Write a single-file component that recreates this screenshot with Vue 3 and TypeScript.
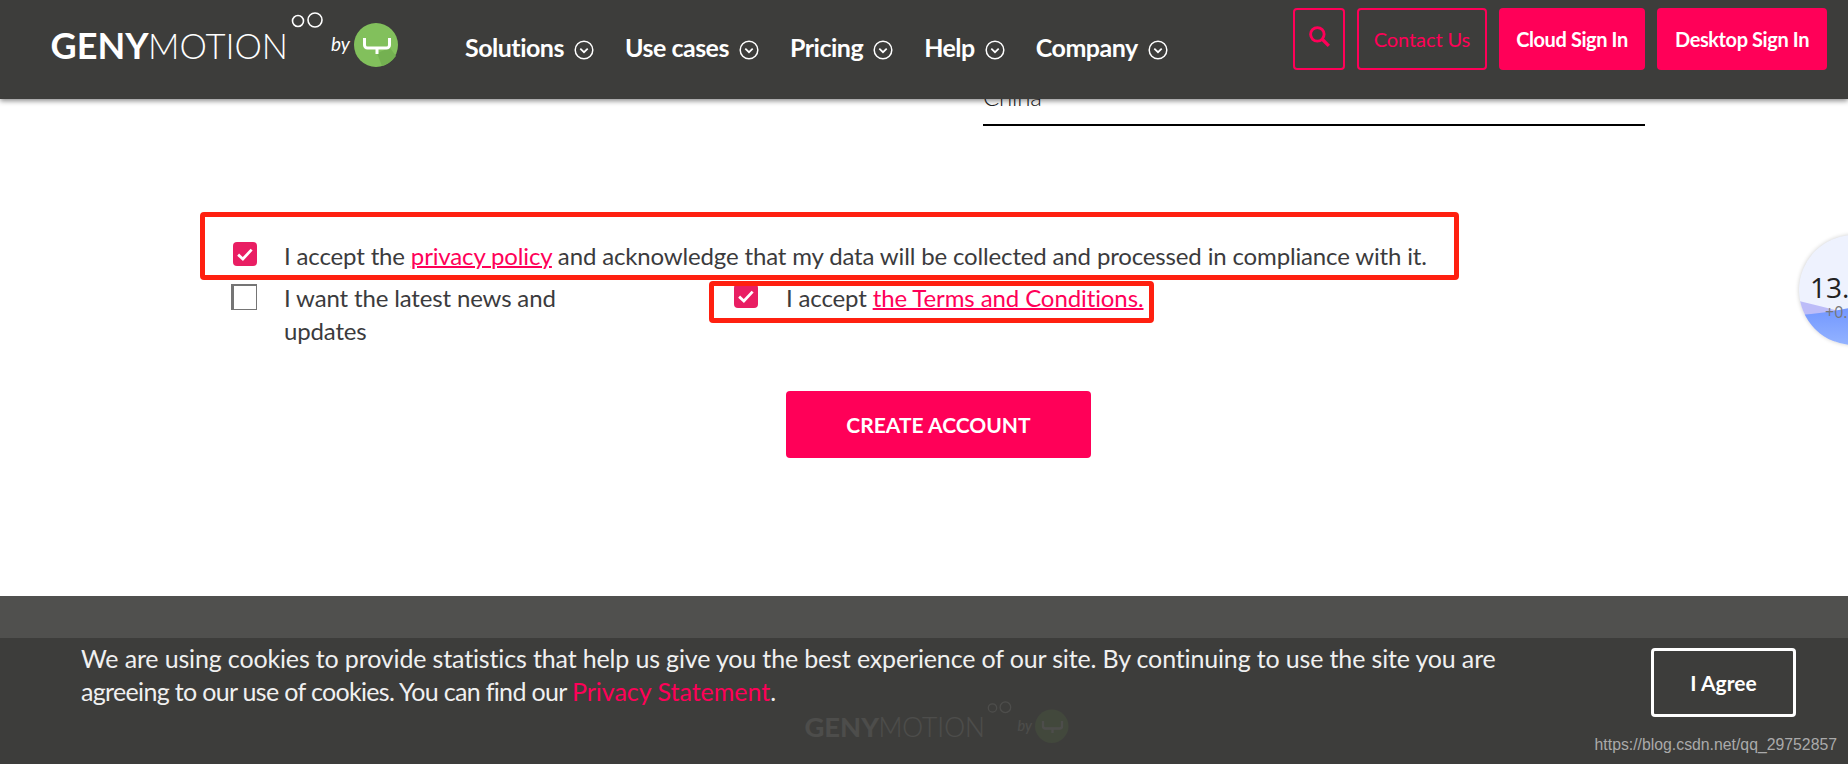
<template>
  <div class="page">
    <header class="site-header">
      <svg class="logo" viewBox="0 0 350 80" xmlns="http://www.w3.org/2000/svg">
        <text class="logo-bold" x="0.6" y="51" textLength="98" lengthAdjust="spacingAndGlyphs">GENY</text>
        <text class="logo-light" x="98" y="51" textLength="140" lengthAdjust="spacingAndGlyphs">MOTION</text>
        <circle class="logo-ring" cx="248" cy="13" r="5.5" />
        <circle class="logo-ring" cx="265" cy="12" r="7" />
        <text class="logo-by" x="281" y="43">by</text>
        <circle class="logo-badge" cx="326" cy="37" r="22" />
        <path class="logo-shade" d="M327 45l13-5 6 8q-6 8-14 10z" />
        <path class="logo-fork" d="M314.5 30v7a3 3 0 0 0 3 3h19a3 3 0 0 0 3-3v-7M327 40v6" />
      </svg>

      <nav class="main-nav">
        <a v-for="item in navItems" :key="item" class="nav-item">
          {{ item }}
          <svg class="nav-chevron" width="20" height="20" viewBox="0 0 20 20" fill="none">
            <circle cx="10" cy="10" r="8.8" stroke="#fff" stroke-width="1.5" />
            <path d="M6.3 8.6 10 12.2l3.7-3.6" stroke="#fff" stroke-width="1.7" />
          </svg>
        </a>
      </nav>

      <div class="header-actions">
        <button class="btn-outline btn-search" aria-label="Search">
          <svg width="24" height="24" viewBox="0 0 22 22" fill="none">
            <circle cx="9.5" cy="9.5" r="6.2" stroke="#ff0058" stroke-width="2.6" />
            <path d="m14 14 6 6" stroke="#ff0058" stroke-width="3" />
          </svg>
        </button>
        <button class="btn-outline btn-contact">Contact Us</button>
        <button class="btn-solid btn-cloud">Cloud Sign In</button>
        <button class="btn-solid btn-desktop">Desktop Sign In</button>
      </div>
    </header>

    <main class="signup">
      <div class="country-field">China</div>

      <div class="consent consent-privacy">
        <span class="check check-on">
          <svg width="20" height="20" viewBox="0 0 16 16" fill="none">
            <path d="m2.5 8.5 3.8 3.5 7-7.5" stroke="#fff" stroke-width="2.2" />
          </svg>
        </span>
        <p>
          I accept the <a class="link">privacy policy</a> and acknowledge that my data will be
          collected and processed in compliance with it.
        </p>
      </div>

      <div class="consent-row">
        <div class="consent consent-news">
          <span class="check check-off"></span>
          <p>I want the latest news and updates</p>
        </div>
        <div class="consent consent-terms">
          <span class="check check-on">
            <svg width="20" height="20" viewBox="0 0 16 16" fill="none">
              <path d="m2.5 8.5 3.8 3.5 7-7.5" stroke="#fff" stroke-width="2.2" />
            </svg>
          </span>
          <p>I accept <a class="link link-thick">the Terms and Conditions.</a></p>
        </div>
      </div>

      <button class="btn-create">CREATE ACCOUNT</button>
    </main>

    <footer class="site-footer">
      <svg class="logo logo-small" viewBox="0 0 350 80" xmlns="http://www.w3.org/2000/svg">
        <text class="logo-bold" x="0.6" y="51" textLength="98" lengthAdjust="spacingAndGlyphs">GENY</text>
        <text class="logo-light" x="98" y="51" textLength="140" lengthAdjust="spacingAndGlyphs">MOTION</text>
        <circle class="logo-ring" cx="248" cy="13" r="5.5" />
        <circle class="logo-ring" cx="265" cy="12" r="7" />
        <text class="logo-by" x="281" y="43">by</text>
        <circle class="logo-badge" cx="326" cy="37" r="22" />
        <path class="logo-fork" d="M314.5 30v7a3 3 0 0 0 3 3h19a3 3 0 0 0 3-3v-7M327 40v6" />
      </svg>
    </footer>

    <!-- 쿠키 배너 -->
    <div class="cookie-bar">
      <p>
        We are using cookies to provide statistics that help us give you the best experience of our
        site. By continuing to use the site you are
        <span class="cookie-tight">agreeing to our use of cookies. You can find our </span>
        <a class="cookie-link">Privacy Statement</a>.
      </p>
      <button class="btn-agree">I Agree</button>
    </div>

    <span class="watermark">https://blog.csdn.net/qq_29752857</span>

    <!-- 스크린샷 위 빨간 표시 -->
    <div class="mark mark-privacy"></div>
    <div class="mark mark-terms"></div>

    <div class="speed-ball">
      <svg class="speed-wave" width="110" height="110" viewBox="0 0 110 110">
        <defs>
          <linearGradient id="waveFill" x1="0" y1="0" x2="0" y2="1">
            <stop offset="0" stop-color="#7095ff" />
            <stop offset="1" stop-color="#93b3ff" />
          </linearGradient>
        </defs>
        <path d="M0 66c12 3 25 6 36 9v35H0z" fill="#bcbcf8" />
        <path d="M0 80c16-1 34-4 50-7 20-3 40-3 60 0v37H0z" fill="url(#waveFill)" />
      </svg>
      <span class="speed-value">13.</span>
      <span class="speed-delta">+0.</span>
    </div>
  </div>
</template>

<script setup lang="ts">
const navItems: string[] = ['Solutions', 'Use cases', 'Pricing', 'Help', 'Company']
</script>

<style>
html,
body {
  margin: 0;
  background: #fff;
  overflow: hidden;
}
</style>

<style scoped>
.page {
  position: relative;
  display: flex;
  flex-direction: column;
  width: 1848px;
  height: 764px;
  overflow: hidden;
  font-family: Lato, "Open Sans", sans-serif;
  color: #3b3b3d;
}

p {
  margin: 0;
}

button {
  font-family: inherit;
  cursor: pointer;
}

/* 헤더 */
.site-header {
  position: absolute;
  z-index: 5;
  top: 0;
  left: 0;
  right: 0;
  height: 99px;
  display: flex;
  align-items: flex-start;
  box-sizing: border-box;
  padding: 8px 21px 0 50px;
  background: #3d3d3b;
  box-shadow: 0 2px 5px rgba(0, 0, 0, 0.45);
}

.logo {
  width: 350px;
  height: 80px;
  flex: none;
}

.logo-bold {
  font: 700 36px Lato, sans-serif;
  fill: #fff;
}

.logo-light {
  font: 300 36px Lato, sans-serif;
  fill: #fff;
}

.logo-by {
  font: italic 400 19px Lato, sans-serif;
  fill: #fff;
}

.logo-ring {
  fill: none;
  stroke: #fff;
  stroke-width: 1.6;
}

.logo-badge {
  fill: #82c05c;
}

.logo-shade {
  fill: #74b151;
}

.logo-fork {
  fill: none;
  stroke: #fff;
  stroke-width: 3;
}

.main-nav {
  display: flex;
  gap: 31px;
  margin-left: 65px;
  margin-top: 22px;
}

.nav-item {
  display: flex;
  align-items: center;
  gap: 10px;
  font-size: 25px;
  line-height: 34px;
  font-weight: 700;
  letter-spacing: -0.5px;
  color: #fff;
  white-space: nowrap;
}

.nav-chevron {
  margin-top: 6px;
}

.header-actions {
  display: flex;
  gap: 12px;
  margin-left: auto;
}

.btn-outline,
.btn-solid {
  height: 62px;
  box-sizing: border-box;
  border-radius: 4px;
  font-size: 20px;
  padding: 0;
}

.btn-outline {
  background: transparent;
  border: 2px solid #ff0058;
  color: #ff0058;
}

.btn-solid {
  background: #ff0058;
  border: none;
  color: #fff;
  font-weight: 700;
  letter-spacing: -0.4px;
}

.btn-search {
  width: 52px;
  display: flex;
  align-items: center;
  justify-content: center;
  padding-bottom: 6px;
}

.btn-contact {
  width: 130px;
  letter-spacing: -0.1px;
}

.btn-cloud {
  width: 146px;
}

.btn-desktop {
  width: 170px;
}

/* 폼 */
.signup {
  flex: 1;
  padding-top: 80px;
  font-size: 24px;
  line-height: 33px;
  letter-spacing: -0.15px;
}

.country-field {
  margin-left: 983px;
  width: 662px;
  height: 44px;
  border-bottom: 2px solid #000;
  font-size: 24px;
  font-weight: 300;
  color: #222;
}

.consent {
  display: flex;
}

.consent-privacy {
  margin: 113px 0 0 233px;
  height: 33px;
}

.consent-privacy .check {
  margin: 3px 27px 0 0;
}

.consent-row {
  display: flex;
  margin: 9px 0 0 231px;
}

.consent-news {
  width: 503px;
}

.consent-news p {
  width: 290px;
}

.consent-news .check {
  margin: 3px 27px 0 0;
}

.consent-terms .check {
  margin: 3px 28px 0 0;
}

.check {
  flex: none;
  box-sizing: border-box;
  display: flex;
  align-items: center;
  justify-content: center;
  width: 24px;
  height: 24px;
  border-radius: 4px;
}

.check-on {
  background: #e91e63;
}

.check-off {
  width: 26px;
  height: 26px;
  border-radius: 0;
  border: 2px solid #757575;
  border-width: 2px 1px 1px 3px;
  background: #fff;
}

.link {
  color: #ff0058;
  text-decoration: underline;
  text-decoration-thickness: 1.5px;
}

.link-thick {
  letter-spacing: -0.1px;
  text-decoration-thickness: 2px;
}

.btn-create {
  display: block;
  width: 305px;
  height: 67px;
  margin: 44px 0 0 786px;
  border: none;
  border-radius: 4px;
  background: #ff0058;
  color: #fff;
  font-size: 21px;
  font-weight: 700;
}

/* 푸터 */
.site-footer {
  height: 168px;
  flex: none;
  box-sizing: border-box;
  padding: 102px 0 0 804px;
  background: #50504e;
}

.logo-small {
  display: block;
  width: 266px;
  height: 61px;
}

.cookie-bar {
  position: absolute;
  left: 0;
  right: 0;
  bottom: 0;
  height: 126px;
  box-sizing: border-box;
  display: flex;
  justify-content: space-between;
  align-items: flex-start;
  padding: 4px 52px 0 81px;
  background: rgba(59, 59, 57, 0.91);
  color: #f0f0f0;
  font-size: 25px;
  line-height: 33px;
  letter-spacing: -0.15px;
}

.cookie-bar p {
  width: 1430px;
}

.cookie-tight {
  letter-spacing: -0.67px;
}

.cookie-link {
  color: #ff0058;
  letter-spacing: 0;
}

.btn-agree {
  width: 145px;
  height: 69px;
  margin-top: 6px;
  background: transparent;
  border: 3px solid #fff;
  border-radius: 4px;
  color: #fff;
  font-size: 21px;
  font-weight: 700;
}

.watermark {
  position: absolute;
  right: 11px;
  bottom: 10px;
  font: 15.8px/18px "Liberation Sans", sans-serif;
  color: #aaa;
}

/* 주석 상자 */
.mark {
  position: absolute;
  box-sizing: border-box;
  border: 5px solid #ff2010;
  border-radius: 4px;
}

.mark-privacy {
  left: 200px;
  top: 212px;
  width: 1259px;
  height: 68px;
}

.mark-terms {
  left: 709px;
  top: 281px;
  width: 445px;
  height: 42px;
}

/* 떠 있는 위젯 */
.speed-ball {
  position: absolute;
  left: 1799px;
  top: 235px;
  width: 110px;
  height: 110px;
  border-radius: 50%;
  overflow: hidden;
  background: #eef2fe;
  box-shadow: 0 0 4px rgba(0, 0, 0, 0.2);
  font-family: "Open Sans", sans-serif;
}

.speed-wave {
  position: absolute;
  left: 0;
  top: 0;
}

.speed-value {
  position: absolute;
  left: 11px;
  top: 34px;
  font-size: 28px;
  line-height: 36px;
  color: #222;
}

.speed-delta {
  position: absolute;
  left: 26px;
  top: 67px;
  font-size: 16px;
  line-height: 20px;
  color: #777;
}
</style>
